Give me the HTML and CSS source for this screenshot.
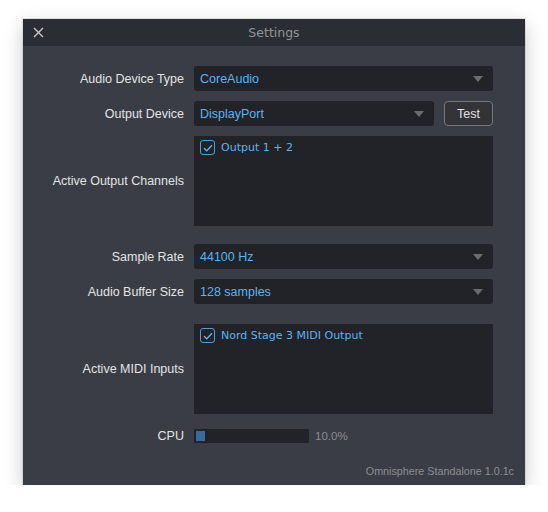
FILE: index.html
```html
<!DOCTYPE html>
<html>
<head>
<meta charset="utf-8">
<link rel="stylesheet" href="styles.css">
</head>
<body>
<div class="window">
  <div class="titlebar">
    <span class="close">
      <svg width="11" height="11" viewBox="0 0 11 11"><path d="M1 1 L10 10 M10 1 L1 10" stroke="#c9cacd" stroke-width="1.4" fill="none"/></svg>
    </span>
    <span class="title">Settings</span>
    <span></span>
  </div>
  <div class="content">
    <div class="row r1">
      <div class="label">Audio Device Type</div>
      <div class="select"><span>CoreAudio</span><i class="tri"></i></div>
    </div>
    <div class="row r2">
      <div class="label">Output Device</div>
      <div class="ctl-pair">
        <div class="select"><span>DisplayPort</span><i class="tri"></i></div>
        <div class="btn">Test</div>
      </div>
    </div>
    <div class="row r3">
      <div class="label">Active Output Channels</div>
      <div class="list">
        <div class="item"><span class="check"><svg width="10" height="8" viewBox="0 0 10 8"><path d="M1 4.2 L3.8 6.8 L9 1.2" stroke="#5cb3ef" stroke-width="1.4" fill="none"/></svg></span><span>Output 1 + 2</span></div>
      </div>
    </div>
    <div class="row r4">
      <div class="label">Sample Rate</div>
      <div class="select"><span>44100 Hz</span><i class="tri"></i></div>
    </div>
    <div class="row r5">
      <div class="label">Audio Buffer Size</div>
      <div class="select"><span>128 samples</span><i class="tri"></i></div>
    </div>
    <div class="row r6">
      <div class="label">Active MIDI Inputs</div>
      <div class="list">
        <div class="item"><span class="check"><svg width="10" height="8" viewBox="0 0 10 8"><path d="M1 4.2 L3.8 6.8 L9 1.2" stroke="#5cb3ef" stroke-width="1.4" fill="none"/></svg></span><span>Nord Stage 3 MIDI Output</span></div>
      </div>
    </div>
    <div class="row r7">
      <div class="label">CPU</div>
      <div class="cpu">
        <div class="meter"><div class="fill" style="width:8%"></div></div>
        <span class="pct">10.0%</span>
      </div>
    </div>
  </div>
  <div class="footer">Omnisphere Standalone 1.0.1c</div>
</div>
</body>
</html>
```

FILE: styles.css
```css
html, body {
  margin: 0;
  padding: 0;
  background: #ffffff;
}
body {
  padding: 19px 0 0 23px;
  font-family: "Liberation Sans", Arial, sans-serif;
}
.window {
  width: 502px;
  height: 466px;
  background: #3a3d46;
  display: flex;
  flex-direction: column;
  box-shadow: 0 0 0 1px rgba(0,0,0,0.08), 0 6px 18px rgba(0,0,0,0.22);
}
.titlebar {
  height: 27px;
  background: #2b2d34;
  display: grid;
  grid-template-columns: 30px 1fr 30px;
  align-items: center;
}
.close {
  display: flex;
  justify-content: center;
  align-items: center;
  height: 27px;
}
.title {
  text-align: center;
  font-family: "DejaVu Sans", sans-serif;
  font-size: 12.5px;
  color: #92949a;
}
.content {
  padding: 20px 32px 0 0;
  display: flex;
  flex-direction: column;
}
.row {
  display: grid;
  grid-template-columns: 161px 1fr;
  column-gap: 10px;
  align-items: center;
}
.r2 { margin-top: 10px; }
.r3 { margin-top: 10px; }
.r4 { margin-top: 18px; }
.r5 { margin-top: 10px; }
.r6 { margin-top: 20px; }
.r7 { margin-top: 15px; }
.label {
  text-align: right;
  font-size: 12.5px;
  color: #e4e4e4;
}
.select {
  height: 25px;
  background: #212328;
  border-radius: 3px;
  display: flex;
  align-items: center;
  justify-content: space-between;
  padding: 0 10px 0 6px;
  font-size: 12.5px;
  color: #5cb3ef;
}
.tri {
  width: 0;
  height: 0;
  border-left: 5.5px solid transparent;
  border-right: 5.5px solid transparent;
  border-top: 6.5px solid #6a6c71;
}
.ctl-pair {
  display: grid;
  grid-template-columns: 240px 49px;
  column-gap: 10px;
}
.btn {
  height: 23px;
  border: 1px solid #77787c;
  border-radius: 4px;
  background: #343337;
  color: #e0e0e0;
  font-size: 12.5px;
  display: flex;
  align-items: center;
  justify-content: center;
}
.list {
  height: 90px;
  background: #212328;
  padding: 3px 6px;
  box-sizing: border-box;
}
.item {
  display: flex;
  align-items: center;
  gap: 6px;
  font-family: "DejaVu Sans", sans-serif;
  font-size: 11px;
  line-height: 17px;
  color: #5cb3ef;
}
.check {
  width: 13px;
  height: 13px;
  border: 1.5px solid #4f9fd8;
  border-radius: 3px;
  display: flex;
  align-items: center;
  justify-content: center;
}
.cpu {
  display: flex;
  align-items: center;
  gap: 6px;
}
.meter {
  width: 115px;
  height: 14px;
  background: #212328;
  padding: 2px;
  box-sizing: border-box;
}
.fill {
  height: 10px;
  background: #3a6aa0;
}
.pct {
  font-size: 11.5px;
  color: #8a8c92;
}
.footer {
  margin-top: auto;
  text-align: right;
  padding: 0 11px 8px 0;
  font-size: 10.75px;
  color: #8c8e94;
}
```
